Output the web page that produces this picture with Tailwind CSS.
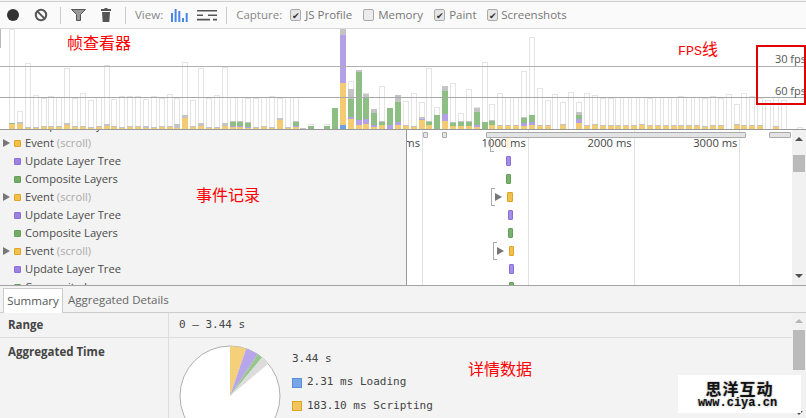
<!DOCTYPE html>
<html>
<head>
<meta charset="utf-8">
<script src="https://cdn.jsdelivr.net/npm/@tailwindcss/browser@4"></script>
</head>
<body class="m-0 overflow-hidden bg-white">
<div class="relative flex h-[418px] w-[806px] flex-col overflow-hidden bg-[#f3f3f3] font-['Open_Sans',sans-serif] text-[11.5px] text-[#444]">

  <!-- toolbar -->
  <div class="mt-px flex h-[28px] shrink-0 items-center border-t border-b border-t-[#cfcfcf] border-b-[#d8d8d8] bg-[#fafafa] text-[#777]">
    <svg class="ml-[7px]" width="12" height="12" viewBox="0 0 12 12"><circle cx="6" cy="6" r="6" fill="#333"/></svg>
    <svg class="ml-[15px]" width="14" height="14" viewBox="0 0 14 14"><circle cx="7" cy="7" r="5.2" fill="none" stroke="#555" stroke-width="2"/><path d="M3.4 3.4L10.6 10.6" stroke="#555" stroke-width="2"/></svg>
    <div class="ml-[12px] h-[17px] w-px bg-[#ccc]"></div>
    <svg class="ml-[10px]" width="15" height="12" viewBox="0 0 15 12"><path d="M0.5 0.5H14.5L9.5 5.5V11.5H5.5V5.5Z" fill="#999" stroke="#555" stroke-width="1"/></svg>
    <svg class="ml-[15px]" width="10" height="14" viewBox="0 0 10 14"><path d="M3.5 0H6.5V1H10V3H0V1H3.5ZM1 4H9L8.3 14H1.7Z" fill="#555"/></svg>
    <div class="ml-[14px] h-[17px] w-px bg-[#ccc]"></div>
    <span class="ml-[9px] text-[#888]">View:</span>
    <svg class="ml-[8px]" width="17" height="13" viewBox="0 0 17 13"><path d="M0 4H2V13H0ZM3.6 0H5.6V13H3.6ZM7.3 2H9.3V13H7.3ZM11 9H13V13H11ZM14.7 4H16.7V13H14.7Z" fill="#4a86e8"/></svg>
    <svg class="ml-[9px]" width="20" height="11" viewBox="0 0 20 11"><path d="M0 0H20V1.6H0ZM0 4.4H6V6H0ZM11 4.4H20V6H11ZM0 8.8H13V10.4H0ZM16 8.8H20V10.4H16Z" fill="#555"/></svg>
    <div class="ml-[9px] h-[17px] w-px bg-[#ccc]"></div>
    <span class="ml-[9px] text-[#888]">Capture:</span>
    <span class="ml-[8px] flex h-[12px] w-[11px] items-center justify-center rounded-[2px] border border-[#aaa] bg-[#e6e6e6] text-[9px] leading-none text-[#333]">✔</span>
    <span class="ml-[4px] w-[58px]">JS Profile</span>
    <span class="flex h-[12px] w-[11px] rounded-[2px] border border-[#aaa] bg-[#ececec]"></span>
    <span class="ml-[4px] w-[56px]">Memory</span>
    <span class="flex h-[12px] w-[11px] items-center justify-center rounded-[2px] border border-[#aaa] bg-[#e6e6e6] text-[9px] leading-none text-[#333]">✔</span>
    <span class="ml-[4px] w-[38px]">Paint</span>
    <span class="flex h-[12px] w-[11px] items-center justify-center rounded-[2px] border border-[#aaa] bg-[#e6e6e6] text-[9px] leading-none text-[#333]">✔</span>
    <span class="ml-[3px]">Screenshots</span>
  </div>

  <!-- overview -->
  <div class="relative h-[100px] shrink-0 overflow-hidden bg-white">
    <div id="bars" class="flex h-full items-end pl-[9px]"></div>
    <div class="absolute top-[37px] left-0 h-px w-full bg-[#b0b0b0]"></div>
    <div class="absolute top-[68px] left-0 h-px w-full bg-[#a8a8a8]"></div>
    <div class="absolute top-0 left-0 h-[19px] w-px bg-[#bbb]"></div>
    <span class="absolute top-[24px] right-0 text-[11px] leading-none text-[#555]">30 fps</span>
    <span class="absolute top-[56px] right-0 text-[11px] leading-none text-[#555]">60 fps</span>
  </div>
  <div class="h-px shrink-0 bg-[#999]"></div>

  <!-- timeline -->
  <div class="relative flex h-[155px] shrink-0 overflow-hidden">
    <div class="w-[406px] shrink-0 overflow-hidden text-[11.2px] text-[#4a4a4a]">
      <div class="-mt-[14px]">
        <div class="flex h-[18px] items-center pl-[25px]">Composite Layers</div>
        <div class="flex h-[18px] items-center"><span class="ml-[3px] h-0 w-0 border-y-[4px] border-l-[7px] border-y-transparent border-l-[#777]"></span><span class="mr-[4px] ml-[4px] h-[7px] w-[7px] rounded-[1px] border border-[#e0a520] bg-[#f2c04c]"></span>Event&nbsp;<span class="text-[#aaa]">(scroll)</span></div>
        <div class="flex h-[18px] items-center"><span class="mr-[4px] ml-[14px] h-[7px] w-[7px] rounded-[1px] border border-[#8a6fd8] bg-[#9b82e0]"></span>Update Layer Tree</div>
        <div class="flex h-[18px] items-center"><span class="mr-[4px] ml-[14px] h-[7px] w-[7px] rounded-[1px] border border-[#64a05a] bg-[#71ad66]"></span>Composite Layers</div>
        <div class="flex h-[18px] items-center"><span class="ml-[3px] h-0 w-0 border-y-[4px] border-l-[7px] border-y-transparent border-l-[#777]"></span><span class="mr-[4px] ml-[4px] h-[7px] w-[7px] rounded-[1px] border border-[#e0a520] bg-[#f2c04c]"></span>Event&nbsp;<span class="text-[#aaa]">(scroll)</span></div>
        <div class="flex h-[18px] items-center"><span class="mr-[4px] ml-[14px] h-[7px] w-[7px] rounded-[1px] border border-[#8a6fd8] bg-[#9b82e0]"></span>Update Layer Tree</div>
        <div class="flex h-[18px] items-center"><span class="mr-[4px] ml-[14px] h-[7px] w-[7px] rounded-[1px] border border-[#64a05a] bg-[#71ad66]"></span>Composite Layers</div>
        <div class="flex h-[18px] items-center"><span class="ml-[3px] h-0 w-0 border-y-[4px] border-l-[7px] border-y-transparent border-l-[#777]"></span><span class="mr-[4px] ml-[4px] h-[7px] w-[7px] rounded-[1px] border border-[#e0a520] bg-[#f2c04c]"></span>Event&nbsp;<span class="text-[#aaa]">(scroll)</span></div>
        <div class="flex h-[18px] items-center"><span class="mr-[4px] ml-[14px] h-[7px] w-[7px] rounded-[1px] border border-[#8a6fd8] bg-[#9b82e0]"></span>Update Layer Tree</div>
        <div class="flex h-[18px] items-center"><span class="mr-[4px] ml-[14px] h-[7px] w-[7px] rounded-[1px] border border-[#64a05a] bg-[#71ad66]"></span>Composite Layers</div>
      </div>
    </div>
    <div class="relative w-[386px] shrink-0 overflow-hidden border-l border-[#999] bg-white">
      <!-- grid columns with time labels -->
      <div class="absolute inset-0 flex text-[11.2px] text-[#444]">
        <div class="flex h-full w-[16px] shrink-0 justify-end border-r border-[#e2e2e2] pt-[5px] pr-[2px] leading-[16px]">ms</div>
        <div class="flex h-full w-[105.8px] shrink-0 justify-end border-r border-[#e2e2e2] pt-[5px] pr-[2px] leading-[16px]">1000 ms</div>
        <div class="flex h-full w-[105.8px] shrink-0 justify-end border-r border-[#e2e2e2] pt-[5px] pr-[2px] leading-[16px]">2000 ms</div>
        <div class="flex h-full w-[105.8px] shrink-0 justify-end border-r border-[#e2e2e2] pt-[5px] pr-[2px] leading-[16px]">3000 ms</div>
      </div>
      <!-- flame rows -->
      <div class="relative flex flex-col pt-[4px]">
        <div class="flex h-[18px] items-center pl-[83px]"><span class="h-[18px] w-[4px] border-y border-l border-[#aaa]"></span><span class="ml-[12px] h-[10px] w-[5px] rounded-[1px] bg-[#fdf3dc]"></span></div>
        <div class="flex h-[18px] items-center pl-[99px]"><span class="h-[10px] w-[5px] rounded-[1px] border border-[#8a6fd8] bg-[#a48de6]"></span></div>
        <div class="flex h-[18px] items-center pl-[99px]"><span class="h-[10px] w-[5px] rounded-[1px] border border-[#64a05a] bg-[#78b26d]"></span></div>
        <div class="flex h-[18px] items-center pl-[84px]"><span class="h-[18px] w-[4px] border-y border-l border-[#aaa]"></span><span class="h-0 w-0 border-y-[4px] border-l-[7px] border-y-transparent border-l-[#777]"></span><span class="ml-[5px] h-[10px] w-[6px] rounded-[1px] border border-[#e0a520] bg-[#f2c04c]"></span></div>
        <div class="flex h-[18px] items-center pl-[101px]"><span class="h-[10px] w-[5px] rounded-[1px] border border-[#8a6fd8] bg-[#a48de6]"></span></div>
        <div class="flex h-[18px] items-center pl-[101px]"><span class="h-[10px] w-[5px] rounded-[1px] border border-[#64a05a] bg-[#78b26d]"></span></div>
        <div class="flex h-[18px] items-center pl-[86px]"><span class="h-[18px] w-[4px] border-y border-l border-[#aaa]"></span><span class="h-0 w-0 border-y-[4px] border-l-[7px] border-y-transparent border-l-[#777]"></span><span class="ml-[5px] h-[10px] w-[5px] rounded-[1px] border border-[#e0a520] bg-[#f2c04c]"></span></div>
        <div class="flex h-[18px] items-center pl-[102px]"><span class="h-[10px] w-[5px] rounded-[1px] border border-[#8a6fd8] bg-[#a48de6]"></span></div>
        <div class="flex h-[18px] items-start pt-[4px] pl-[102px]"><span class="h-[10px] w-[5px] rounded-[1px] border border-[#64a05a] bg-[#78b26d]"></span></div>
      </div>
    </div>
    <!-- upper scrollbar -->
    <div class="flex w-[14px] shrink-0 flex-col items-center bg-[#f1f1f1] pt-[7px]">
      <span class="h-0 w-0 border-x-[4px] border-b-[4px] border-x-transparent border-b-[#505050]"></span>
      <span class="mt-[14px] h-[17px] w-[12px] bg-[#bababa]"></span>
      <span class="mt-[102px] h-0 w-0 border-x-[4px] border-t-[4px] border-x-transparent border-t-[#505050]"></span>
    </div>
    <!-- overview selection handles -->
    <div class="absolute top-[2px] left-[423px] h-[6px] w-[5px] rounded-[1px] border border-[#aaa] bg-[#e6e6e6]"></div>
    <div class="absolute top-[2px] left-[442px] h-[6px] w-[5px] rounded-[1px] border border-[#aaa] bg-[#e6e6e6]"></div>
    <div class="absolute top-[2px] left-[486px] h-[6px] w-[260px] rounded-[1px] border border-[#aaa] bg-[#e3e3e3]"></div>
    <div class="absolute top-[2px] left-[769px] h-[6px] w-[22px] rounded-[1px] border border-[#aaa] bg-[#e3e3e3]"></div>
  </div>
  <div class="h-px shrink-0 bg-[#a3a3a3]"></div>

  <!-- bottom panel -->
  <div class="flex h-[27px] shrink-0 items-end border-b border-[#cdcdcd] pl-[3px]">
    <div class="-mb-px flex h-[25px] w-[60px] items-center justify-center border-x border-t border-[#ccc] bg-white text-[#555]">Summary</div>
    <div class="flex h-[25px] items-center pl-[5px] text-[#666]">Aggregated Details</div>
  </div>
  <div class="flex min-h-0 flex-1">
    <div class="flex w-[792px] shrink-0 flex-col">
      <div class="flex h-[25px] shrink-0 items-center border-b border-[#ddd]">
        <div class="flex h-full w-[169px] shrink-0 items-center border-r border-[#ddd] pl-[8px] font-bold text-[#444]">Range</div>
        <div class="pl-[10px] font-['DejaVu_Sans_Mono',monospace] text-[11px] text-[#444]">0 – 3.44 s</div>
      </div>
      <div class="flex flex-1 overflow-hidden">
        <div class="w-[169px] shrink-0 border-r border-[#ddd] pt-[5px] pl-[8px] font-bold text-[#444]">Aggregated Time</div>
        <div class="flex pt-[6px] pl-[9px] font-['DejaVu_Sans_Mono',monospace] text-[11px] text-[#444]">
          <svg class="shrink-0" width="104" height="104" viewBox="0 0 104 104">
            <circle cx="52" cy="52" r="50" fill="#fff" stroke="#b0b0b0" stroke-width="1"/>
            <path d="M52 52L52 2A50 50 0 0 1 68.1 4.65Z" fill="#f3d079"/>
            <path d="M52 52L68.1 4.65A50 50 0 0 1 79.7 10.35Z" fill="#b8a6ea"/>
            <path d="M52 52L79.7 10.35A50 50 0 0 1 84 13.6Z" fill="#98c78e"/>
            <path d="M52 52L84 13.6A50 50 0 0 1 90.2 19.65Z" fill="#dcdcdc"/>
          </svg>
          <div class="ml-[10px] flex flex-col pt-[3px]">
            <div class="flex h-[24px] items-center">3.44 s</div>
            <div class="flex h-[24px] items-center"><span class="mr-[5px] h-[10px] w-[10px] border border-[#5a8fd8] bg-[#76a6e6]"></span>2.31 ms Loading</div>
            <div class="flex h-[24px] items-center"><span class="mr-[5px] h-[10px] w-[10px] border border-[#e0a520] bg-[#f3c55f]"></span>183.10 ms Scripting</div>
          </div>
        </div>
      </div>
    </div>
    <!-- lower scrollbar -->
    <div class="flex w-[14px] shrink-0 flex-col items-center bg-[#f1f1f1] pt-[6px]">
      <span class="h-0 w-0 border-x-[4px] border-b-[4px] border-x-transparent border-b-[#b5b5b5]"></span>
      <span class="mt-[7px] h-[40px] w-[12px] bg-[#bababa]"></span>
      <span class="mt-[41px] h-0 w-0 border-x-[4px] border-t-[4px] border-x-transparent border-t-[#505050]"></span>
    </div>
  </div>

  <!-- annotations -->
  <span class="absolute top-[32px] left-[67px] font-['Noto_Sans_CJK_SC',sans-serif] text-[16px] leading-[20px] text-[#f00]">帧查看器</span>
  <span class="absolute top-[38px] left-[678px] font-['Liberation_Mono','Noto_Sans_CJK_SC',monospace] text-[13.3px] leading-[20px] text-[#f00]">FPS<span class="font-['Noto_Sans_CJK_SC',sans-serif] text-[16px]">线</span></span>
  <span class="absolute top-[184px] left-[196px] font-['Noto_Sans_CJK_SC',sans-serif] text-[16px] leading-[20px] text-[#f00]">事件记录</span>
  <span class="absolute top-[358px] left-[468px] font-['Noto_Sans_CJK_SC',sans-serif] text-[16px] leading-[20px] text-[#f00]">详情数据</span>
  <div class="absolute top-[45px] left-[756px] h-[60px] w-[50px] border-2 border-[#e00000]"></div>
  <div class="absolute top-[375px] left-[678px] flex h-[38px] w-[123px] flex-col items-center justify-center bg-white leading-none text-[#111]">
    <span class="font-['Noto_Sans_CJK_SC',sans-serif] text-[16px] leading-[18px] font-bold tracking-[1px] [text-shadow:0_0_2px_#888]">思洋互动</span>
    <span class="-ml-[4px] font-['Liberation_Mono',monospace] text-[12px] leading-[13px] font-bold [text-shadow:0_0_2px_#888]">www.ciya.cn</span>
  </div>
</div>

<script>
  // [total height, blue, orange, purple, green, gray]
  var d = [
    [100,0,5,0,1,0],[18,0,5,0,0,2],[66,0,1,0,0,1],[34,0,1,0,0,1],[31,0,2,0,0,1],[33,0,2,0,0,1],[32,0,2,0,0,1],[61,0,4,0,0,2],
    [31,0,2,0,0,1],[36,0,2,0,0,1],[29,0,1,0,0,1],[32,0,2,0,0,1],[64,0,3,0,0,2],[30,0,2,0,0,1],[33,0,1,0,0,1],[33,0,2,0,0,1],
    [33,0,2,0,0,1],[30,0,1,0,0,2],[33,0,1,0,0,1],[31,0,2,0,0,1],[35,0,2,0,0,1],[31,0,1,0,0,4],[67,0,11,0,0,3],[29,0,2,0,0,1],
    [61,0,3,0,0,3],[31,0,1,0,0,1],[34,0,1,0,0,1],[62,0,3,0,0,3],[32,0,2,1,4,1],[32,0,2,1,4,1],[31,0,1,1,4,1],[31,0,1,0,0,1],
    [32,0,2,0,0,1],[33,0,1,0,0,1],[31,0,9,0,0,2],[32,0,1,0,0,1],[32,0,2,1,4,1],[1,0,0,0,0,1],[5,0,0,0,3,0],[0,0,0,0,0,0],
    [5,0,0,0,3,0],[21,0,0,0,21,0],[100,4,42,48,0,6],[48,0,10,2,18,10],[59,0,4,5,48,2],[36,0,5,5,22,3],[20,0,2,2,12,4],[43,0,4,0,3,1],
    [21,0,0,4,17,0],[34,0,4,3,20,7],
    [28,0,3,0,0,1],[36,0,2,0,0,1],[27,0,9,1,0,2],[61,0,4,0,3,1],[22,0,0,0,14,0],[43,0,8,7,23,5],[46,0,3,0,3,1],[16,0,3,0,4,1],
    [40,0,3,0,4,1],[22,0,2,2,13,4],[67,0,0,0,7,0],[25,0,4,0,4,1],[36,0,3,0,0,1],[32,0,3,0,0,1],[32,0,3,0,0,1],[58,0,3,3,5,1],
    [92,0,4,3,7,0],[41,0,3,0,0,1],[29,0,3,0,0,1],[35,0,0,0,0,0],[27,0,4,0,0,1],[37,0,0,0,0,0],[27,0,6,4,4,3],[36,0,3,0,0,1],
    [34,0,4,0,0,1],[31,0,3,0,0,1],[31,0,3,0,0,1],[32,0,3,0,0,1],[32,0,3,0,0,1],[32,0,3,0,0,1],[32,0,4,0,0,1],[31,0,3,0,0,1],[32,0,3,0,0,1],
    [32,0,3,0,0,1],[32,0,3,0,0,1],[33,0,3,0,0,1],[32,0,3,0,0,1],[32,0,3,0,0,1],[31,0,2,0,0,1],[33,0,3,0,0,1],[31,0,3,0,0,1],
    [35,0,0,0,0,0],[25,0,4,0,0,1],[36,0,3,0,0,1],[33,0,3,0,0,1],[31,0,3,0,0,1],[29,0,0,0,0,0],[32,0,2,0,0,1],[29,0,0,0,0,0],
    [0,0,0,0,0,0],[2,0,0,0,0,0]
  ];
  var cls = ["bg-[#6c9fe3]","bg-[#f3cb72]","bg-[#b3a1e8]","bg-[#8dbf84]","bg-[#c4c4c4]"];
  var host = document.getElementById("bars");
  d.forEach(function (b) {
    var cell = document.createElement("div");
    cell.className = "flex h-full w-[7.88px] shrink-0 items-end";
    if (b[0]) {
      var bar = document.createElement("div");
      bar.className = "flex w-[6px] flex-col-reverse border-x border-t border-[#e4e4e4]";
      bar.style.height = b[0] + "px";
      for (var i = 0; i < 5; i++) {
        if (b[i + 1]) {
          var s = document.createElement("div");
          s.className = cls[i] + " -mx-px shrink-0";
          s.style.height = b[i + 1] + "px";
          bar.appendChild(s);
        }
      }
      cell.appendChild(bar);
    }
    host.appendChild(cell);
  });
</script>
</body>
</html>
